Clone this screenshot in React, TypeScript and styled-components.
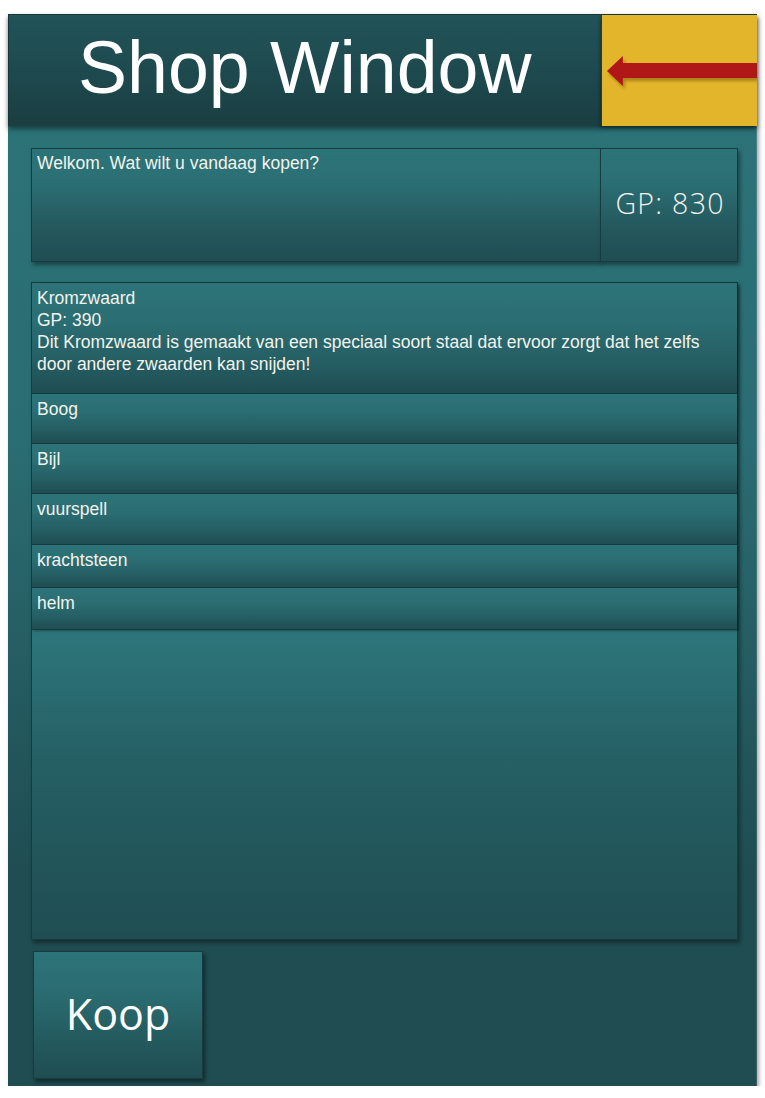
import React from "react";
import styled, { createGlobalStyle } from "styled-components";

const Global = createGlobalStyle`
  html, body { margin: 0; padding: 0; background: #ffffff; }
  body { font-family: "Liberation Sans", Arial, sans-serif; }
`;

const LIGHT = "#2c7479";
const DARK = "#1f4d52";
const TEXT = "#f3f3ec";

const Frame = styled.div`
  width: 749px;
  height: 1072px;
  margin: 14px 0 0 8px;
  display: flex;
  flex-direction: column;
  background: linear-gradient(to bottom, ${LIGHT} 0%, #2a6d72 40%, ${DARK} 80%, ${DARK} 100%);
  box-shadow: 2px 3px 4px rgba(0, 0, 0, 0.35), inset -1px 0 0 rgba(255,255,255,0.12);
  box-sizing: border-box;
`;

const Header = styled.header`
  height: 112px;
  display: flex;
  flex-shrink: 0;
  box-shadow: 0 3px 5px rgba(0, 0, 0, 0.45);
  position: relative;
  z-index: 2;
  border-top: 1px solid #16393c;
  box-sizing: border-box;
`;

const TitleArea = styled.div`
  flex: 1;
  display: flex;
  align-items: center;
  padding-left: 69px;
  background: linear-gradient(to bottom, #215358 0%, #1e4b50 45%, #1a3e42 100%);
  border-left: 1px solid #163638;
`;

const Title = styled.h1`
  margin: 0;
  font-family: "Liberation Sans", Arial, sans-serif;
  font-weight: 400;
  font-size: 73.5px;
  line-height: 1;
  color: #ffffff;
  transform: translateY(-3px);
`;

const BackBox = styled.div`
  width: 156px;
  background: #e3b52a;
  border-left: 1px solid #1a3e42;
  box-sizing: border-box;
  display: flex;
  align-items: center;
  box-shadow: -1px 2px 3px rgba(0,0,0,0.35);
`;

const Content = styled.main`
  flex: 1;
  display: flex;
  flex-direction: column;
  padding: 22px 19px 0 23px;
`;

const TopRow = styled.div`
  display: flex;
  height: 114px;
`;

const Panel = styled.div`
  background: linear-gradient(to bottom, ${LIGHT} 0%, #2b6f74 30%, #24585d 70%, ${DARK} 100%);
  border: 1px solid #173b3e;
  box-sizing: border-box;
  box-shadow: 2px 3px 4px rgba(0, 0, 0, 0.4);
  color: ${TEXT};
`;

const Welcome = styled(Panel)`
  width: 571px;
  padding: 3px 5px;
  font-size: 17.5px;
  line-height: 22px;
`;

const Gold = styled(Panel)`
  width: 138px;
  margin-left: -1px;
  display: flex;
  align-items: center;
  justify-content: center;
  font-family: "Open Sans", "DejaVu Sans", sans-serif;
  font-weight: 300;
  font-size: 28.5px;
  letter-spacing: 1.3px;
  padding: 0 0 4px 2px;
`;

const List = styled.div`
  margin-top: 20px;
  height: 658px;
  display: flex;
  flex-direction: column;
  background: linear-gradient(to bottom, ${LIGHT} 0%, ${LIGHT} 55%, #256065 72%, ${DARK} 100%);
  border: 1px solid #173b3e;
  box-sizing: border-box;
  box-shadow: 2px 3px 4px rgba(0, 0, 0, 0.4);
`;

const Item = styled.div<{ $h: number }>`
  height: ${(p) => p.$h}px;
  flex-shrink: 0;
  box-sizing: border-box;
  padding: 4px 5px;
  font-size: 17.5px;
  line-height: 22px;
  color: ${TEXT};
  background: linear-gradient(to bottom, ${LIGHT} 0%, #2b6e73 35%, #255f64 70%, ${DARK} 100%);
  border-bottom: 1px solid #173b3e;
  box-shadow: 2px 1px 2px rgba(0, 0, 0, 0.3);
`;

const Footer = styled.div`
  margin-top: 11px;
  padding-left: 2px;
  display: flex;
`;

const BuyButton = styled.button`
  width: 170px;
  height: 128px;
  border: 1px solid #173b3e;
  background: linear-gradient(to bottom, ${LIGHT} 0%, #2a6b70 35%, #235a5e 70%, ${DARK} 100%);
  box-shadow: 2px 3px 4px rgba(0, 0, 0, 0.45);
  color: #ffffff;
  font-family: "Open Sans", "DejaVu Sans", sans-serif;
  font-size: 43px;
  font-weight: 400;
  padding: 0 0 4px 0;
  cursor: pointer;
`;

const Arrow = () => (
  <svg width="156" height="112" viewBox="0 0 156 112" style={{ display: "block" }}>
    <defs>
      <filter id="arrowShadow" x="-10%" y="-30%" width="130%" height="180%">
        <feGaussianBlur stdDeviation="1.5" />
      </filter>
    </defs>
    <path
      d="M5 56 L21 41 L21 48 L156 48 L156 63 L21 63 L21 71 Z"
      fill="#7a5a10"
      opacity="0.55"
      transform="translate(2 3)"
      filter="url(#arrowShadow)"
    />
    <path d="M5 56 L21 41 L21 48 L156 48 L156 63 L21 63 L21 71 Z" fill="#b01818" />
  </svg>
);

const items: { name: string; h: number; lines?: string[] }[] = [
  {
    name: "Kromzwaard",
    h: 111,
    lines: [
      "GP: 390",
      "Dit Kromzwaard is gemaakt van een speciaal soort staal dat ervoor zorgt dat het zelfs door andere zwaarden kan snijden!",
    ],
  },
  { name: "Boog", h: 50 },
  { name: "Bijl", h: 50 },
  { name: "vuurspell", h: 51 },
  { name: "krachtsteen", h: 43 },
  { name: "helm", h: 42 },
];

export default function App() {
  return (
    <>
      <Global />
      <Frame>
        <Header>
          <TitleArea>
            <Title>Shop Window</Title>
          </TitleArea>
          <BackBox>
            <Arrow />
          </BackBox>
        </Header>
        <Content>
          <TopRow>
            <Welcome>Welkom. Wat wilt u vandaag kopen?</Welcome>
            <Gold>GP: 830</Gold>
          </TopRow>
          <List>
            {items.map((it) => (
              <Item key={it.name} $h={it.h}>
                <div>{it.name}</div>
                {it.lines?.map((l) => (
                  <div key={l}>{l}</div>
                ))}
              </Item>
            ))}
          </List>
          <Footer>
            <BuyButton>Koop</BuyButton>
          </Footer>
        </Content>
      </Frame>
    </>
  );
}
